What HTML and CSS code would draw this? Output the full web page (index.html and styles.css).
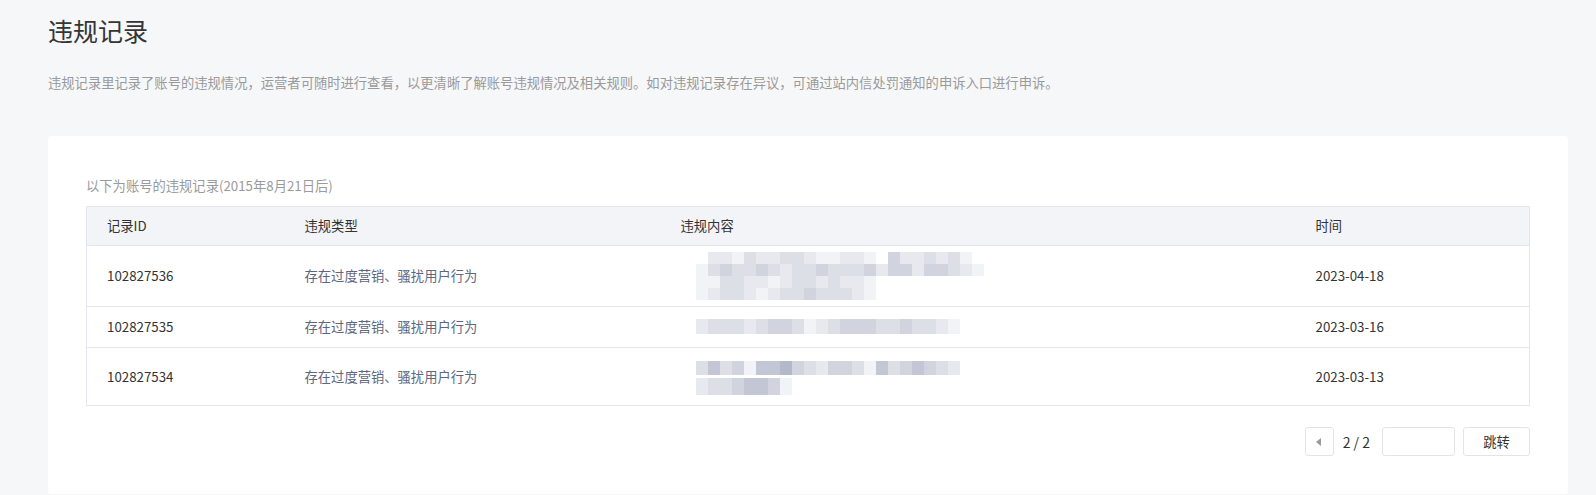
FILE: index.html
```html
<!DOCTYPE html>
<html lang="zh-CN">
<head>
<meta charset="utf-8">
<title>违规记录</title>
<link rel="stylesheet" href="styles.css">
</head>
<body>
<div class="page">
  <h1 class="title">违规记录</h1>
  <p class="desc">违规记录里记录了账号的违规情况，运营者可随时进行查看，以更清晰了解账号违规情况及相关规则。如对违规记录存在异议，可通过站内信处罚通知的申诉入口进行申诉。</p>
  <div class="card">
    <p class="sub">以下为账号的违规记录(2015年8月21日后)</p>
    <table class="records">
      <colgroup>
        <col class="c-id"><col class="c-type"><col class="c-content"><col class="c-time">
      </colgroup>
      <thead>
        <tr><th>记录ID</th><th>违规类型</th><th>违规内容</th><th>时间</th></tr>
      </thead>
      <tbody>
        <tr class="tall">
          <td>102827536</td>
          <td class="type">存在过度营销、骚扰用户行为</td>
          <td>
            <div class="mosaic m24 big">
              <span class="w"></span><span class="b"></span><span class="b"></span><span class="a"></span><span class="c"></span><span class="b"></span><span class="b"></span><span class="c"></span><span class="c"></span><span class="b"></span><span class="a"></span><span class="a"></span><span class="b"></span><span class="b"></span><span class="a"></span><span class="w"></span><span class="d"></span><span class="b"></span><span class="b"></span><span class="c"></span><span class="b"></span><span class="c"></span><span class="a"></span><span class="w"></span>
              <span class="a"></span><span class="c"></span><span class="d"></span><span class="c"></span><span class="c"></span><span class="d"></span><span class="c"></span><span class="b"></span><span class="c"></span><span class="c"></span><span class="d"></span><span class="c"></span><span class="c"></span><span class="c"></span><span class="d"></span><span class="b"></span><span class="d"></span><span class="d"></span><span class="b"></span><span class="d"></span><span class="d"></span><span class="c"></span><span class="b"></span><span class="a"></span>
              <span class="a"></span><span class="a"></span><span class="c"></span><span class="c"></span><span class="b"></span><span class="b"></span><span class="a"></span><span class="b"></span><span class="c"></span><span class="c"></span><span class="b"></span><span class="c"></span><span class="b"></span><span class="b"></span><span class="a"></span><span class="w"></span><span class="w"></span><span class="w"></span><span class="w"></span><span class="w"></span><span class="w"></span><span class="w"></span><span class="w"></span><span class="w"></span>
              <span class="a"></span><span class="b"></span><span class="c"></span><span class="c"></span><span class="b"></span><span class="a"></span><span class="b"></span><span class="c"></span><span class="c"></span><span class="d"></span><span class="c"></span><span class="c"></span><span class="c"></span><span class="b"></span><span class="a"></span><span class="w"></span><span class="w"></span><span class="w"></span><span class="w"></span><span class="w"></span><span class="w"></span><span class="w"></span><span class="w"></span><span class="w"></span>
            </div>
          </td>
          <td>2023-04-18</td>
        </tr>
        <tr>
          <td>102827535</td>
          <td class="type">存在过度营销、骚扰用户行为</td>
          <td>
            <div class="mosaic m22 single">
              <span class="b"></span><span class="c"></span><span class="c"></span><span class="c"></span><span class="b"></span><span class="c"></span><span class="d"></span><span class="d"></span><span class="c"></span><span class="a"></span><span class="b"></span><span class="c"></span><span class="d"></span><span class="d"></span><span class="d"></span><span class="c"></span><span class="c"></span><span class="d"></span><span class="c"></span><span class="c"></span><span class="b"></span><span class="a"></span>
            </div>
          </td>
          <td>2023-03-16</td>
        </tr>
        <tr class="tall">
          <td>102827534</td>
          <td class="type">存在过度营销、骚扰用户行为</td>
          <td>
            <div class="mosaic m22 first">
              <span class="c"></span><span class="e"></span><span class="c"></span><span class="d"></span><span class="a"></span><span class="e"></span><span class="e"></span><span class="f"></span><span class="d"></span><span class="c"></span><span class="b"></span><span class="d"></span><span class="d"></span><span class="c"></span><span class="a"></span><span class="e"></span><span class="c"></span><span class="d"></span><span class="e"></span><span class="d"></span><span class="c"></span><span class="b"></span>
            </div>
            <div class="mosaic m8 second">
              <span class="b"></span><span class="c"></span><span class="c"></span><span class="d"></span><span class="e"></span><span class="e"></span><span class="d"></span><span class="a"></span>
            </div>
          </td>
          <td>2023-03-13</td>
        </tr>
      </tbody>
    </table>
    <div class="pager">
      <button class="prev" type="button" aria-label="上一页"><span class="tri"></span></button>
      <span class="count">2 / 2</span>
      <input class="jump-input" type="text">
      <button class="jump" type="button">跳转</button>
    </div>
  </div>
</div>
</body>
</html>
```

FILE: styles.css
```css
html, body {
  margin: 0;
  background: #f6f7f9;
}
body {
  font-family: "Noto Sans CJK SC", "Noto Sans", sans-serif;
  color: #333;
}
.page {
  padding: 12px 28px 0 48px;
}
.title {
  margin: 0;
  font-size: 25px;
  font-weight: 400;
  line-height: 36px;
  color: #353535;
}
.desc {
  margin: 25px 0 0;
  font-size: 13.3px;
  line-height: 20px;
  color: #9a9a9a;
}
.card {
  margin-top: 43px;
  background: #fff;
  border-radius: 3px;
  padding: 40px 38px 38px;
}
.sub {
  margin: 0;
  font-size: 13.3px;
  line-height: 20px;
  color: #9a9a9a;
}
.records {
  margin-top: 10px;
  width: 100%;
  border-collapse: collapse;
  table-layout: fixed;
  border: 1px solid #e4e6ec;
  font-size: 13.3px;
}
.c-id { width: 198px; }
.c-type { width: 376px; }
.c-content { width: 635px; }
.records th {
  padding: 9px 20px;
  line-height: 20px;
  text-align: left;
  font-weight: 400;
  background: #f3f4f7;
  color: #333;
}
.records td {
  padding: 10px 20px;
  line-height: 20px;
  color: #333;
  border-top: 1px solid #e4e6ec;
  vertical-align: middle;
}
.records td.type {
  color: #5e6780;
}
.mosaic {
  display: grid;
  margin-left: 15px;
}
.mosaic span.a { background: #f2f3f6; }
.mosaic span.b { background: #e8e9ef; }
.mosaic span.c { background: #dddfe7; }
.mosaic span.d { background: #d1d4df; }
.mosaic span.e { background: #c3c7d5; }
.mosaic span.f { background: #b3b8cb; }
.mosaic span.w { background: transparent; }
.m24 { grid-template-columns: repeat(24, 12px); }
.m22 { grid-template-columns: repeat(22, 12px); }
.m8 { grid-template-columns: repeat(8, 12px); }
.big {
  grid-auto-rows: 12px;
  margin-top: -4px;
  margin-bottom: -4px;
}
.single {
  grid-auto-rows: 15px;
  margin-top: 2px;
  margin-bottom: 3px;
}
.first {
  grid-auto-rows: 14px;
  margin-top: 3px;
  margin-bottom: 3px;
}
.second {
  grid-auto-rows: 17px;
  margin-top: 3px;
  margin-bottom: 0;
}
.pager {
  display: flex;
  justify-content: flex-end;
  align-items: center;
  margin-top: 21px;
}
.prev {
  width: 29px;
  height: 29px;
  padding: 0;
  border: 1px solid #e3e4e8;
  border-radius: 3px;
  background: #fff;
  display: flex;
  align-items: center;
  justify-content: center;
}
.tri {
  width: 0;
  height: 0;
  border-top: 4.5px solid transparent;
  border-bottom: 4.5px solid transparent;
  border-right: 5px solid #9a9a9a;
  margin-right: 2px;
}
.count {
  margin: 0 12px 0 9px;
  font-size: 14px;
  color: #333;
  line-height: 20px;
}
.jump-input {
  box-sizing: border-box;
  width: 73px;
  height: 29px;
  border: 1px solid #e3e4e8;
  border-radius: 3px;
  background: #fff;
  margin: 0 8px 0 0;
  padding: 0 8px;
  font: inherit;
}
.jump {
  box-sizing: border-box;
  width: 67px;
  height: 29px;
  border: 1px solid #e3e4e8;
  border-radius: 3px;
  background: #fff;
  font-family: inherit;
  font-size: 13.3px;
  color: #333;
  padding: 0;
}
```
